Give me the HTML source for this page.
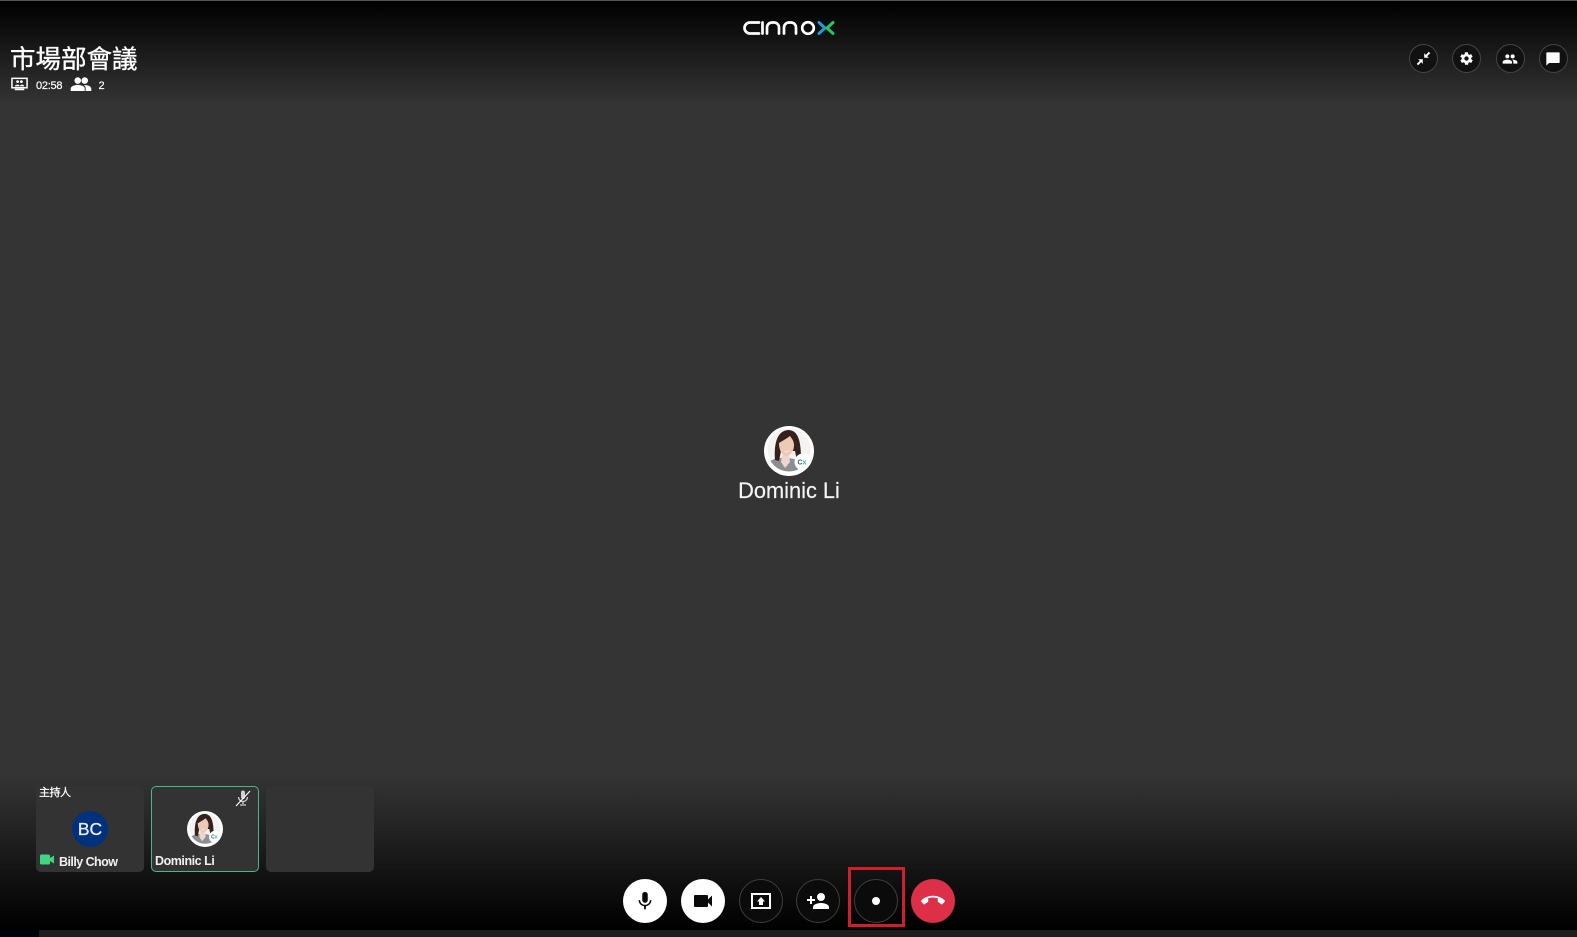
<!DOCTYPE html>
<html lang="zh-Hant">
<head>
<meta charset="utf-8">
<title>市場部會議</title>
<style>
*{box-sizing:border-box;margin:0;padding:0}
html,body{width:1577px;height:937px;overflow:hidden;background:#343434}
body{position:relative;font-family:"Liberation Sans","Noto Sans CJK TC",sans-serif;color:#fff}
.abs{position:absolute}
.top{left:0;top:0;width:1577px;height:104px;background:linear-gradient(#000 0,#0a0a0a 20%,#1b1b1b 52%,#343434 100%)}
.topline{left:0;top:0;width:1577px;height:1px;background:#555}
.bot{left:0;top:775px;width:1577px;height:155px;background:linear-gradient(#343434 0,#232323 35%,#0f0f0f 70%,#000 100%)}
.strip{left:39px;top:930px;width:1538px;height:7px;background:#1d1d1d}
.strip0{left:0;top:930px;width:39px;height:7px;background:#01030c}
.title{left:10px;top:40px;font-size:25.5px;line-height:36px;font-family:"Noto Sans CJK TC","Liberation Sans",sans-serif;white-space:nowrap;-webkit-text-stroke:.35px #fff}
.small{font-size:11px;line-height:14px;white-space:nowrap;-webkit-text-stroke:.2px #fff}
.tb{width:29px;height:29px;top:44px;border-radius:50%;background:#111;border:1px solid #444;display:flex;align-items:center;justify-content:center}
.cb{width:44px;height:44px;top:879px;border-radius:50%;display:flex;align-items:center;justify-content:center}
.w{background:#fff}
.k{background:#0b0b0b;border:1px solid #3d3d3d}
.r{background:#dd3048}
.tile{top:786px;width:108px;height:86px;background:#333;border-radius:5px}
.name{font-weight:700;font-size:12.5px;line-height:16px;letter-spacing:-.45px;white-space:nowrap;color:#f1f1f1}
</style>
</head>
<body>
<svg width="0" height="0" style="position:absolute">
<defs>
<clipPath id="ph"><circle cx="25" cy="24" r="21.500"/></clipPath>
<symbol id="face" viewBox="0 0 50 50">
<rect width="50" height="50" fill="#fff"/>
<g clip-path="url(#ph)">
<rect width="50" height="50" fill="#f4f3f2"/>
<path d="M4 46 L6 35 Q14 31 22 32 Q32 32 38 37 L42 46Z" fill="#8b8e93"/>
<path d="M17 36 L21 42 L26 36 L25 29 H18Z" fill="#ecd7cc"/>
<path d="M11 34 C10 20 12 5 24 4 C35 4 37 17 37 33 L33 35 L31 25 H17 L15 35Z" fill="#34211c"/>
<path d="M15 17 C18 15 22 13 26 10 C28 13 30 15 30 19 C30 26 26 30 22.500 30 C18.500 30 15 25 15 17Z" fill="#eec9b6"/>
<path d="M19 24.500 Q22.500 27 26 24 Q22.500 28.200 19 24.500Z" fill="#fff"/>
</g>
<circle cx="39" cy="36" r="8.500" fill="#fff"/>
<text x="33.500" y="38.500" font-size="7" font-family="Liberation Sans" font-weight="700" fill="#34606f">C</text><text x="38.500" y="38.500" font-size="7" font-family="Liberation Sans" font-weight="700" fill="#25b9a2">x</text>
</symbol>
<clipPath id="cp"><circle cx="25" cy="25" r="25"/></clipPath>
</defs>
</svg>

<div class="abs top"></div>
<div class="abs topline"></div>
<div class="abs bot"></div>
<div class="abs strip0"></div>
<div class="abs strip"></div>

<!-- logo -->
<svg class="abs" style="left:743px;top:19px" width="93" height="18" viewBox="0 0 93 18" fill="none" stroke-width="2.700" stroke-linecap="round">
<title>cinnox</title>
<g stroke="#fff">
<path d="M16 3.500H7A5.500 5.500 0 0 0 7 14.500H16"/>
<path d="M19.500 3.500V14.500"/>
<path d="M24 14.500V8.500A5 5 0 0 1 29 3.500H31A5 5 0 0 1 36 8.500V14.500"/>
<path d="M41 14.500V8.500A5 5 0 0 1 46 3.500H48A5 5 0 0 1 53 8.500V14.500"/>
<circle cx="65" cy="9" r="5.800"/>
</g>
<path d="M76 3.500L82 9L76 14.500" stroke="#1f9bd1" stroke-width="3"/>
<path d="M90 3.500L84 9L90 14.500" stroke="#23c566" stroke-width="3"/>
</svg>

<div class="abs title">市場部會議</div>

<svg class="abs" style="left:11px;top:77px" width="17" height="14" viewBox="0 0 18 14">
<rect x="1" y="1" width="16" height="10" fill="none" stroke="#fff" stroke-width="1.600"/>
<rect x="4" y="12" width="10" height="1.600" fill="#fff"/>
<circle cx="7" cy="4.500" r="1.500" fill="#fff"/><circle cx="11" cy="4.500" r="1.500" fill="#fff"/>
<path d="M4 9.500C4 7 10 7 9 9.500ZM9.500 9.500C9.500 7 14 7 14 9.500Z" fill="#fff"/>
</svg>
<div class="abs small" style="left:36px;top:79px;letter-spacing:-.25px">02:58</div>
<svg class="abs" style="left:70px;top:77px" width="22" height="14" viewBox="0 0 22 15" fill="#fff">
<circle cx="7.500" cy="3.800" r="3.500"/><circle cx="15" cy="3.800" r="3.500"/>
<path d="M0 15V12.500C0 9.500 5 8.500 7.500 8.500S15 9.500 15 12.500V15Z"/>
<path d="M16 15V12.500C16 11 15.500 9.800 14.200 8.800C17 8.300 22 9.500 22 12.500V15Z"/>
</svg>
<div class="abs small" style="left:98.500px;top:79px">2</div>

<!-- top right -->
<div class="abs tb" style="left:1409px"><svg width="17" height="17" viewBox="0 0 24 24" fill="#fff"><path d="M13 11V4.500L15.300 6.800L19.500 2.500L21.500 4.500L17.200 8.700L19.500 11Z"/><path d="M11 13V19.500L8.700 17.200L4.500 21.500L2.500 19.500L6.800 15.300L4.500 13Z"/></svg></div>
<div class="abs tb" style="left:1452px"><svg width="15" height="15" viewBox="0 0 24 24" fill="#fff"><path fill-rule="evenodd" d="M19.400 13c.1-.3.100-.7.100-1s0-.7-.1-1l2.100-1.600c.2-.2.200-.4.100-.6l-2-3.500c-.1-.2-.4-.3-.6-.2l-2.500 1c-.5-.4-1.100-.7-1.700-1l-.4-2.600c0-.3-.2-.5-.5-.5h-4c-.3 0-.5.200-.5.500l-.4 2.600c-.6.300-1.200.6-1.700 1l-2.500-1c-.2-.1-.5 0-.6.200l-2 3.500c-.1.200-.1.400.1.600L4.600 11c-.1.300-.1.700-.1 1s0 .7.100 1l-2.100 1.600c-.2.200-.2.400-.1.600l2 3.500c.1.200.4.300.6.200l2.500-1c.5.400 1.100.7 1.700 1l.4 2.600c0 .3.200.5.500.5h4c.3 0 .5-.2.500-.5l.4-2.600c.6-.3 1.200-.6 1.700-1l2.500 1c.2.100.5 0 .6-.2l2-3.500c.1-.2.100-.4-.1-.6ZM12 15.500a3.500 3.500 0 1 1 0-7 3.500 3.500 0 0 1 0 7Z"/></svg></div>
<div class="abs tb" style="left:1495.500px"><svg width="16" height="16" viewBox="0 0 24 24" fill="#fff"><path d="M16 11a3 3 0 1 0 0-6 3 3 0 0 0 0 6ZM8 11a3 3 0 1 0 0-6 3 3 0 0 0 0 6ZM8 13c-2.300 0-7 1.200-7 3.500V19h14v-2.500C15 14.200 10.300 13 8 13ZM16 13h-1c1.200.9 2 2 2 3.500V19h6v-2.500C23 14.200 18.300 13 16 13Z"/></svg></div>
<div class="abs tb" style="left:1538.500px"><svg width="16" height="16" viewBox="0 0 24 24" fill="#fff"><path d="M21 2H3C2 2 2 3 2 3.500V22L6 18H21C22 18 22 17 22 16.500V3.500C22 3 22 2 21 2Z"/></svg></div>

<!-- center -->
<svg class="abs" style="left:764px;top:426px" width="50" height="50" viewBox="0 0 50 50"><g clip-path="url(#cp)"><use href="#face" width="50" height="50"/></g></svg>
<div class="abs" style="left:689px;top:477px;width:200px;text-align:center;font-size:21.800px;line-height:27px;color:#f6f6f6;-webkit-text-stroke:.15px #f6f6f6">Dominic Li</div>

<!-- tiles -->
<div class="abs tile" style="left:36px"></div>
<div class="abs" style="left:39px;top:785px;font-size:11px;line-height:15px;font-family:'Noto Sans CJK TC','Liberation Sans',sans-serif;letter-spacing:-.5px;-webkit-text-stroke:.25px #fff">主持人</div>
<div class="abs" style="left:72px;top:811px;width:36px;height:36px;border-radius:50%;background:#00317f;text-align:center;font-size:17.500px;line-height:36px;color:#eef;-webkit-text-stroke:.3px #eef">BC</div>
<svg class="abs" style="left:40px;top:854px" width="14" height="11" viewBox="0 0 14 11" fill="#3ed682"><rect x="0" y="0.500" width="10" height="10" rx="1.500"/><path d="M10 4L14 1.500V9.500L10 7Z"/></svg>
<div class="abs name" style="left:59px;top:854px;letter-spacing:-.55px">Billy Chow</div>

<div class="abs tile" style="left:151px;border:1px solid #49b884"></div>
<svg class="abs" style="left:235px;top:790px" width="16" height="17" viewBox="0 0 16 17" fill="none"><path d="M6 2.500a2 2 0 0 1 4 0V7a2 2 0 0 1-4 0Z" fill="#d0d0d0"/><path d="M3.500 7a4.500 4.500 0 0 0 9 0M8 11.500V14M5 15H11" stroke="#d0d0d0" stroke-width="1.300"/><path d="M1 16L15 1" stroke="#fff" stroke-width="1.200"/></svg>
<svg class="abs" style="left:187px;top:811px" width="36" height="36" viewBox="0 0 50 50"><g clip-path="url(#cp)"><use href="#face" width="50" height="50"/></g></svg>
<div class="abs name" style="left:155px;top:853px">Dominic Li</div>

<div class="abs tile" style="left:266px;width:108px"></div>

<!-- controls -->
<div class="abs cb w" style="left:623px"><svg width="22" height="22" viewBox="0 0 24 24" fill="#0a0a0a"><path d="M12 14a3 3 0 0 0 3-3V5a3 3 0 0 0-6 0v6a3 3 0 0 0 3 3Z"/><path d="M17.300 11c0 3-2.500 5.100-5.300 5.100S6.700 14 6.700 11H5c0 3.400 2.700 6.200 6 6.700V21h2v-3.300c3.300-.5 6-3.300 6-6.700Z"/></svg></div>
<div class="abs cb w" style="left:681px"><svg width="24" height="24" viewBox="0 0 24 24" fill="#0a0a0a"><path d="M17 10.500V7a1 1 0 0 0-1-1H4a1 1 0 0 0-1 1v10a1 1 0 0 0 1 1h12a1 1 0 0 0 1-1v-3.500l4 4v-11Z"/></svg></div>
<div class="abs cb k" style="left:738.500px"><svg width="22" height="22" viewBox="0 0 22 22"><rect x="2" y="4" width="18" height="14" fill="none" stroke="#fff" stroke-width="2"/><path d="M11 7L15 11.500H13V15H9V11.500H7Z" fill="#fff"/></svg></div>
<div class="abs cb k" style="left:795.500px"><svg width="24" height="24" viewBox="0 0 24 24" fill="#fff"><path d="M15 12a4 4 0 1 0 0-8 4 4 0 0 0 0 8ZM6 10V7H4v3H1v2h3v3h2v-3h3v-2ZM15 14c-2.700 0-8 1.300-8 4v2h16v-2c0-2.700-5.300-4-8-4Z"/></svg></div>
<div class="abs" style="left:848px;top:867px;width:57px;height:60px;border:3px solid #cf1f2c"></div>
<div class="abs cb k" style="left:853.500px;"><div style="width:8px;height:8px;border-radius:50%;background:#fff;margin-top:-1px"></div></div>
<div class="abs cb r" style="left:911px"><svg width="24" height="24" viewBox="0 0 24 24" fill="#fff"><path d="M12 8.500c-1.700 0-3.300.3-4.800.8v3.100c0 .4-.2.800-.6.900-1 .5-1.900 1.100-2.600 1.800-.2.200-.5.300-.7.300-.3 0-.5-.1-.7-.3L.3 12.800c-.2-.2-.3-.4-.3-.7s.1-.5.300-.7C3.300 8.500 7.400 6.800 12 6.800s8.700 1.700 11.700 4.600c.2.200.3.400.3.700s-.1.500-.3.700l-2.300 2.300c-.2.200-.4.300-.7.300-.2 0-.5-.1-.7-.3-.7-.7-1.600-1.300-2.600-1.800-.4-.1-.6-.5-.6-.9V9.300c-1.500-.5-3.100-.8-4.800-.8Z"/></svg></div>
</body>
</html>
